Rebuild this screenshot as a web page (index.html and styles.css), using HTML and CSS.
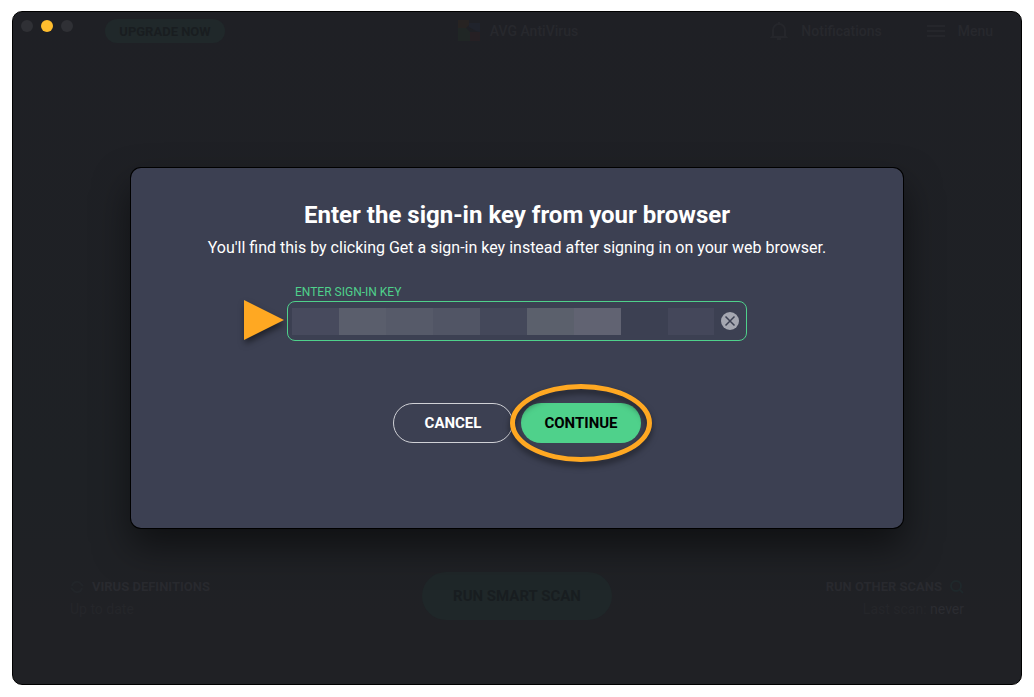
FILE: index.html
```
<!DOCTYPE html>
<html lang="en">
<head>
<meta charset="utf-8">
<title>AVG AntiVirus</title>
<link rel="stylesheet" href="styles.css">
</head>
<body>
<div class="window">
  <header class="topbar">
    <div class="start">
      <div class="lights">
        <span class="light"></span>
        <span class="light light-minimize"></span>
        <span class="light"></span>
      </div>
      <button class="upgrade" type="button">UPGRADE NOW</button>
    </div>
    <div class="brand">
      <svg class="logo" viewBox="0 0 24 24" aria-hidden="true">
        <path fill="#272322" d="M2 1h11v5l-3 3H2z"/>
        <path fill="#202625" d="M2 9h8l4 4v9H2z"/>
        <path fill="#20232c" d="M13 4h11v9l-4-1-7-4z"/>
        <path fill="#262024" d="M14 13h10v9H14z"/>
      </svg>
      <span>AVG AntiVirus</span>
    </div>
    <nav class="actions">
      <a class="action" href="#notifications">
        <svg class="icon" viewBox="0 0 20 20" aria-hidden="true"><path d="M4 15V9a6 6 0 0 1 12 0v6l1 1H3zM8 18h4M10 1v2"/></svg>
        <span>Notifications</span>
      </a>
      <a class="action" href="#menu">
        <svg class="icon" viewBox="0 0 20 20" aria-hidden="true"><path d="M1 5h18M1 10h18M1 15h18"/></svg>
        <span>Menu</span>
      </a>
    </nav>
  </header>

  <footer class="statusbar">
    <section class="status">
      <h2 class="status-title">
        <svg class="status-icon" viewBox="0 0 14 14" aria-hidden="true"><path d="M2 6a5 5 0 0 1 9-2l2 2M12 8a5 5 0 0 1-9 2L1 8"/></svg>
        VIRUS DEFINITIONS
      </h2>
      <p class="status-text">Up to date</p>
    </section>
    <button class="scan" type="button">RUN SMART SCAN</button>
    <section class="status status-right">
      <h2 class="status-title status-scans">
        RUN OTHER SCANS
        <svg class="status-icon search" viewBox="0 0 14 14" aria-hidden="true"><circle cx="6" cy="6" r="5"/><path d="M9 9l4 4"/></svg>
      </h2>
      <p class="status-text">Last scan: <span class="never">never</span></p>
    </section>
  </footer>

  <div class="overlay">
    <form class="dialog" role="dialog" aria-labelledby="dialog-title">
      <h1 class="title" id="dialog-title">Enter the sign-in key from your browser</h1>
      <p class="hint">You'll find this by clicking Get a sign-in key instead after signing in on your web browser.</p>
      <div class="field">
        <label class="label" for="key">ENTER SIGN-IN KEY</label>
        <div class="control">
          <svg class="pointer" viewBox="0 0 40 40" aria-hidden="true"><path fill="#ffa822" d="M0 0l40 20L0 40z"/></svg>
          <input class="key" id="key" type="text">
          <button class="clear" type="button" aria-label="Clear">
            <svg class="clear-icon" viewBox="0 0 18 18" aria-hidden="true"><circle cx="9" cy="9" r="9" fill="#a5a7b1"/><path d="M4.500 4.500l9 9M13.500 4.500l-9 9" stroke="#3c4052" stroke-width="1.500"/></svg>
          </button>
        </div>
      </div>
      <div class="buttons">
        <button class="button cancel" type="button">CANCEL</button>
        <div class="primary">
          <button class="button continue" type="submit">CONTINUE</button>
          <span class="ring"></span>
        </div>
      </div>
    </form>
  </div>
</div>
</body>
</html>
```
FILE: styles.css
```
* {
  box-sizing: border-box;
}

body {
  margin: 0;
  padding: 11px 12px 12px;
  min-height: 100vh;
  display: flex;
  background: #fff;
  font-family: Roboto, "Liberation Sans", sans-serif;
}

h1, h2, p {
  margin: 0;
}

button {
  border: 0;
  font-family: inherit;
  cursor: pointer;
}

.window {
  position: relative;
  flex: 1;
  display: flex;
  flex-direction: column;
  justify-content: space-between;
  border: 1px solid #000;
  border-radius: 10px;
  background: linear-gradient(#1f2025, #1e2125 70%, #202125 90%);
  overflow: hidden;
}

.topbar {
  display: grid;
  grid-template-columns: 1fr auto 1fr;
  align-items: center;
  padding: 7px 8px 0;
  color: #27282d;
  font-size: 14px;
  font-weight: 500;
}

.start {
  display: flex;
  align-items: flex-start;
  gap: 32px;
}

.lights {
  display: flex;
  gap: 8px;
}

.light {
  width: 12px;
  height: 12px;
  margin-top: 1px;
  border-radius: 50%;
  background: #2f3035;
}

.light-minimize {
  background: #ffbd2e;
}

.upgrade {
  width: 120px;
  height: 24px;
  padding: 0;
  border-radius: 12px;
  background: #20282a;
  color: #191d20;
  font-size: 13px;
  font-weight: 700;
}

.brand {
  display: flex;
  align-items: center;
  gap: 10px;
}

.logo {
  width: 24px;
  height: 24px;
}

.actions {
  display: flex;
  justify-content: flex-end;
  gap: 44px;
  padding-right: 20px;
}

.action {
  display: flex;
  align-items: center;
  gap: 12px;
  color: inherit;
  text-decoration: none;
}

.icon {
  width: 20px;
  height: 20px;
  fill: none;
  stroke: #25262b;
  stroke-width: 2;
}

.statusbar {
  display: grid;
  grid-template-columns: 1fr auto 1fr;
  align-items: center;
  padding: 0 57px 64px;
  color: #292a2f;
}

.status {
  padding-top: 5px;
}

.status-title {
  display: flex;
  align-items: center;
  gap: 8px;
  font-size: 13px;
  line-height: 18px;
  font-weight: 700;
}

.status-icon {
  width: 14px;
  height: 14px;
  fill: none;
  stroke: #222529;
  stroke-width: 2;
}

.search {
  stroke: #1f282b;
}

.status-text {
  margin-top: 3px;
  color: #25262a;
  font-size: 14px;
  line-height: 20px;
}

.status-right {
  justify-self: end;
  text-align: right;
}

.status-scans {
  justify-content: flex-end;
}

.never {
  color: #2b2c31;
}

.scan {
  width: 190px;
  height: 48px;
  border-radius: 24px;
  background: #1f2729;
  color: #181d20;
  font-size: 15px;
  font-weight: 700;
}

.overlay {
  position: absolute;
  inset: 0;
  display: flex;
  align-items: center;
  justify-content: center;
}

.dialog {
  display: flex;
  flex-direction: column;
  align-items: center;
  width: 772px;
  max-width: 100%;
  padding: 31px 24px 85px;
  border-radius: 10px;
  background: #3c4052;
  box-shadow: 0 0 0 1px #000, 0 18px 36px rgba(0, 0, 0, 0.5);
  color: #fff;
  text-align: center;
}

.title {
  font-size: 24px;
  line-height: 32px;
  font-weight: 700;
}

.hint {
  margin-top: 7px;
  font-size: 16px;
  line-height: 20px;
  font-weight: 400;
}

.field {
  width: 460px;
  max-width: 100%;
  margin-top: 27px;
}

.label {
  display: block;
  padding-left: 8px;
  color: #4fd18b;
  font-size: 12px;
  line-height: 14px;
  text-align: left;
}

.control {
  position: relative;
  display: flex;
  align-items: center;
  height: 40px;
  margin-top: 2px;
  padding: 0 7px 0 4px;
  border: 1px solid #4fd18b;
  border-radius: 8px;
}

.pointer {
  position: absolute;
  left: -44px;
  top: -2px;
  width: 40px;
  height: 40px;
  overflow: visible;
  filter: drop-shadow(1px 4px 3px rgba(0, 0, 0, 0.5));
}

.key {
  flex: 1;
  min-width: 0;
  height: 27px;
  margin-right: 7px;
  padding: 0;
  border: 0;
  outline: 0;
  background: linear-gradient(90deg,
    #474a5d 0 47px,
    #5a5e6c 47px 94px,
    #565a69 94px 141px,
    #515565 141px 188px,
    #44485a 188px 235px,
    #5b606c 235px 282px,
    #616372 282px 329px,
    #3c4052 329px 376px,
    #44475a 376px);
  color: #fff;
  font: 16px Roboto, sans-serif;
}

.clear {
  display: flex;
  padding: 0;
  background: none;
}

.clear-icon {
  width: 18px;
  height: 18px;
}

.buttons {
  display: flex;
  gap: 8px;
  margin-top: 62px;
}

.button {
  width: 120px;
  height: 40px;
  padding: 0;
  border-radius: 20px;
  font-size: 15px;
  font-weight: 700;
}

.cancel {
  border: 1px solid #d0d1d6;
  background: none;
  color: #fff;
}

.primary {
  position: relative;
}

.continue {
  background: #4fd18b;
  color: #000;
}

.ring {
  position: absolute;
  inset: -19px -11px;
  border: 5px solid #ffa822;
  border-radius: 50%;
  filter: drop-shadow(0 4px 3px rgba(0, 0, 0, 0.5));
  pointer-events: none;
}
```
